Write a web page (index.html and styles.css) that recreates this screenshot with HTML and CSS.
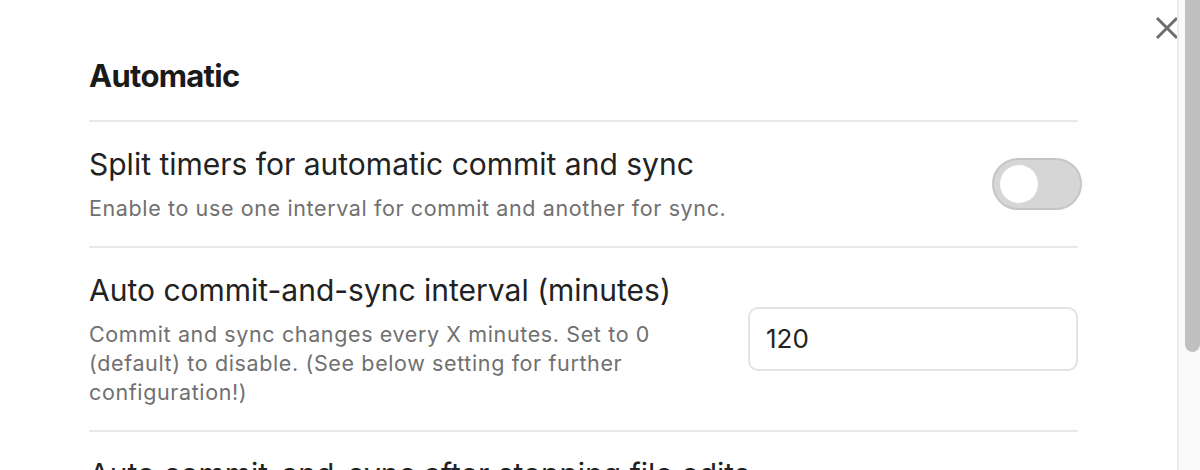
FILE: index.html
```html
<!DOCTYPE html>
<html>
<head>
<meta charset="utf-8">
<link rel="stylesheet" href="styles.css">
</head>
<body>
<div class="modal">
  <div class="content">
    <h2 class="heading">Automatic</h2>
    <div class="item">
      <div class="info">
        <div class="name">Split timers for automatic commit and sync</div>
        <div class="desc">Enable to use one interval for commit and another for sync.</div>
      </div>
      <div class="control">
        <div class="toggle"><div class="knob"></div></div>
      </div>
    </div>
    <div class="item">
      <div class="info">
        <div class="name">Auto commit-and-sync interval (minutes)</div>
        <div class="desc">Commit and sync changes every X minutes. Set to 0 (default) to disable. (See below setting for further configuration!)</div>
      </div>
      <div class="control">
        <input class="text-input" type="text" value="120">
      </div>
    </div>
    <div class="item">
      <div class="info">
        <div class="name">Auto commit-and-sync after stopping file edits</div>
      </div>
    </div>
  </div>
  <div class="close">
    <svg width="24" height="24" viewBox="0 0 24 24"><path d="M2 2 L22 22 M22 2 L2 22" stroke="#6e6e6e" stroke-width="3" stroke-linecap="butt" fill="none"/></svg>
  </div>
  <div class="scrolltrack"><div class="thumb"></div></div>
</div>
</body>
</html>
```
FILE: styles.css
```css
html, body {
  margin: 0;
  padding: 0;
  background: #ffffff;
  overflow: hidden;
}
body {
  font-family: Inter, "Noto Sans", "Liberation Sans", sans-serif;
  color: #222222;
}
.modal {
  position: relative;
  width: 1200px;
  height: 470px;
  overflow: hidden;
}
.content {
  width: 989px;
  padding-left: 89px;
  padding-top: 58px;
}
.heading {
  margin: 0;
  font-size: 31px;
  font-weight: 700;
  letter-spacing: -0.7px;
  line-height: 36px;
  color: #1a1a1a;
  padding-bottom: 26px;
  border-bottom: 2px solid #e8e8e8;
}
.item {
  display: flex;
  align-items: center;
  padding: 22px 0 23px;
  border-bottom: 2px solid #e8e8e8;
}
.item:nth-of-type(3) {
  padding-bottom: 24px;
}
.info {
  flex: 1;
  min-width: 0;
}
.name {
  font-size: 30px;
  line-height: 40px;
  color: #222222;
}
.desc {
  font-size: 21.5px;
  letter-spacing: 0.62px;
  line-height: 29px;
  color: #707070;
  padding-top: 10px;
}
.control {
  margin-left: 30px;
  display: flex;
  justify-content: flex-end;
}
.toggle {
  width: 90px;
  height: 52px;
  box-sizing: border-box;
  border-radius: 26px;
  background: #d6d6d6;
  border: 2px solid #c6c6c6;
  display: flex;
  align-items: center;
  padding-left: 6px;
  margin-right: -4px;
}
.knob {
  width: 38px;
  height: 38px;
  border-radius: 50%;
  background: #ffffff;
}
.text-input {
  width: 330px;
  height: 64px;
  box-sizing: border-box;
  border: 2px solid #e3e3e3;
  border-radius: 10px;
  padding: 0 16px;
  font-family: Inter, "Noto Sans", "Liberation Sans", sans-serif;
  font-size: 26px;
  color: #222222;
  background: #ffffff;
  outline: none;
}
.close {
  position: absolute;
  left: 1155px;
  top: 16px;
  width: 24px;
  height: 24px;
}
.scrolltrack {
  position: absolute;
  left: 1177px;
  top: 0;
  width: 23px;
  height: 470px;
  background: #fafafa;
  border-left: 2px solid #ececec;
  box-sizing: border-box;
}
.thumb {
  position: absolute;
  left: 6px;
  top: 0;
  width: 15px;
  height: 352px;
  background: #c0c0c0;
  border-radius: 0 0 8px 8px;
}
```
